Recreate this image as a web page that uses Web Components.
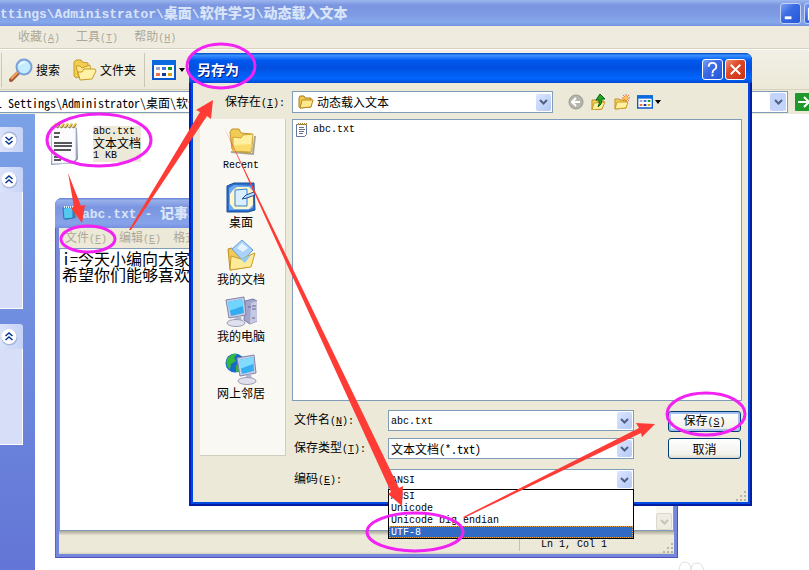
<!DOCTYPE html>
<html lang="zh-CN">
<head>
<meta charset="utf-8">
<meta name="viewport" content="width=device-width, initial-scale=1">
<title>另存为</title>
<style>
    html, body {
        margin: 0;
        height: 100%;
    }

    body {
        font: 12px/12px "Noto Sans CJK SC", sans-serif;
        font-feature-settings: "hwid";
        color: #000;
        overflow: hidden;
    }
</style>
</head>
<body>
    <xp-desktop>
        <explorer-window slot="explorer">
            <file-tile name="abc.txt" type="文本文档" size="1 KB"></file-tile>
        </explorer-window>
        <notepad-window slot="notepad">i=今天小编向大家
希望你们能够喜欢</notepad-window>
        <save-dialog slot="dialog"></save-dialog>
        <guide-marks slot="marks"></guide-marks>
    </xp-desktop>

<script>
const ICONS = {
    folder: `<svg viewBox="0 0 32 32"><path d="M6 27l22 2 2-18" fill="none" stroke="#aaa693" stroke-width="2"/><path d="M5 7l2-3h7l2 4 11 1v16l-2 3-16-2-2-2z" fill="#f0cb55" stroke="#c0952a"/><path d="M8 12l8 1 2-3 10-1-2 18-18-1z" fill="#fff09f" stroke="#d1a63a"/><path d="M9 20l18-1-1 7H9z" fill="#f9dc6d"/></svg>`,
    openFolder: `<svg viewBox="0 0 16 16"><path d="M1 4l1-2h4l1 2h6v9l-11 1-1-1z" fill="#f0c850" stroke="#a87c18"/><path d="M4 6h11l-2 7-11 1z" fill="#ffe98d" stroke="#b88a20"/></svg>`,
    folders: `<svg viewBox="0 0 24 24"><path d="M1 4l2-2h5l1 2 6 1v10l-12 5-2-2z" fill="#f3cd50" stroke="#c79b28"/><path d="M3 8h4l2 2 8-3 1 9-12 4z" fill="#ffe889" stroke="#c79b28"/><path d="M5 14h4l2-3h11l1 2-4 8-12 1z" fill="#fff1a5" stroke="#c79b28"/></svg>`,
    search: `<svg viewBox="0 0 24 24"><path d="M2 22l8-8" stroke="#a35a2b" stroke-width="4" stroke-linecap="round"/><path d="M2 21l7-7" stroke="#f1a35d" stroke-width="2"/><circle cx="15" cy="9" r="7.500" fill="#c3edff" stroke="#7a9fd8" stroke-width="2"/><path d="M10 8q2-5 7-4-4 1-7 4z" fill="#fff"/></svg>`,
    views: `<svg viewBox="0 0 24 20"><path d="M1 1h22v18H1z" fill="#fff" stroke="#0a5ad0" stroke-width="2"/><path d="M0 0h24v5H0z" fill="#0a6ae0"/><path d="M4 7h4v3H4z" fill="#a4a4d0"/><path d="M10 7h4v3h-4z" fill="#3b74e4"/><path d="M16 7h4v3h-4z" fill="#119a20"/><path d="M4 13h4v3H4z" fill="#ef7448"/><path d="M10 13h4v3h-4z" fill="#163a95"/><path d="M16 13h4v3h-4z" fill="#d8a413"/></svg>`,
    caret: `<svg viewBox="0 0 6 4"><path d="M0 0h6L3 4z"/></svg>`,
    go: `<svg viewBox="0 0 18 18"><rect width="18" height="18" rx="1" fill="#1f982c"/><path d="M3 9h11M9 4l5 5-5 5" fill="none" stroke="#fff" stroke-width="2"/></svg>`,
    chevron: `<svg viewBox="0 0 9 6"><path d="M1 1l3.500 3.500L8 1" fill="none" stroke="currentColor" stroke-width="2"/></svg>`,
    twisty: `<svg viewBox="0 0 18 18"><circle cx="9.500" cy="9.500" r="8" fill="#a9b6dc"/><circle cx="9" cy="8.500" r="7.500" fill="#fff"/><path d="M5.500 8L9 5l3.500 3M5.500 12L9 9l3.500 3" fill="none" stroke="#0a3b96" stroke-width="1.600"/></svg>`,
    note: `<svg viewBox="0 0 30 44"><path d="M2 6h26l1 31-4 4-23 2z" fill="#8791b8"/><path d="M2 5h25v32l-4 4-20 1z" fill="#fafaff" stroke="#b6bbcf"/><path d="M4 6l3-4M8 6l3-4M12 6l3-4M16 6l3-4M20 6l3-4M24 6l3-4" stroke="#856c24" stroke-width="2"/><path d="M4 5l3-4M8 5l3-4M12 5l3-4M16 5l3-4M20 5l3-4M24 5l3-4" stroke="#f4cf45" stroke-width="1.500"/><path d="M5 11h6M5 15h5M5 21h18M5 24h18M5 28h17M5 35h6M5 38h7" stroke="#222" stroke-width="1.300"/></svg>`,
    sheet: `<svg viewBox="0 0 14 16"><path d="M1.500 2.500h10v10l-2 2h-8z" fill="#fff" stroke="#68739c"/><path d="M3.500 3V1M5.500 3V1M7.500 3V1M9.500 3V1M11.500 3V1" stroke="#a78b3f"/><path d="M4 5.500h5M4 7.500h6M4 9.500h5M4 11.500h4" stroke="#6b7390"/></svg>`,
    notepad: `<svg viewBox="0 0 14 16"><path d="M1 3l11-1 2 11-11 2z" fill="#517b9b"/><path d="M1 3l10-1v11l-9 1z" fill="#56c8ef" stroke="#2677b8"/><path d="M2 2h9" stroke="#dff6ff" stroke-width="2" stroke-dasharray="1 1"/></svg>`,
    back: `<svg viewBox="0 0 16 16"><circle cx="8" cy="8" r="7" fill="#b5b5ad" stroke="#999990"/><path d="M12 8H4M8 4L4 8l4 4" fill="none" stroke="#fff" stroke-width="2"/></svg>`,
    up: `<svg viewBox="0 0 16 16"><path d="M1 6h4l1 1h7l-2 8-10 1z" fill="#f5d464" stroke="#b98d1d"/><path d="M3 9l11-1-3 7-10 1z" fill="#ffef9c" stroke="#c89b28"/><path d="M5 6l4-6 5 5h-3q0 6-4 8 2-4 1-7z" fill="#25a326" stroke="#08680f"/></svg>`,
    create: `<svg viewBox="0 0 16 16"><path d="M1 5h4l1 1h6v8L1 15z" fill="#f3cf5c" stroke="#c08f20"/><path d="M3 8h11l-2 6-11 1z" fill="#fff09e" stroke="#cd9e2a"/><path d="M12 0v8M8 4h8M9 1l6 6M15 1L9 7" stroke="#ef6840"/><circle cx="12" cy="4" r="2" fill="#ffca50"/></svg>`,
    desktop: `<svg viewBox="0 0 32 32"><path d="M2 4l7-3h20l1 27-7 2H2z" fill="#2d6fcb" stroke="#174e99"/><path d="M4 6l5-3 18 1 1 22-5 2H4z" fill="#6aa9f1"/><path d="M8 8l4-3h12l4 4v14l-4 4H9l-4-5V12z" fill="#fff6c9"/><path d="M10 8l12-1v17H10z" fill="#d9efff" stroke="#3881ca"/><path d="M17 17l4-4 8-3 1 3-8 3z" fill="#b6dcff" stroke="#204f99"/></svg>`,
    documents: `<svg viewBox="0 0 32 32"><path d="M3 10l4-1 3 3h13v16L5 31z" fill="#f0c957" stroke="#bd9023"/><path d="M7 10L17 1l11 10-10 11z" fill="#a9d3fb" stroke="#6a9edb"/><path d="M12 9l5-5 6 5-5 4z" fill="#e4f3ff"/><path d="M5 31l1-14 10 3 14-6-4 14z" fill="#ffeb97" stroke="#c79b28"/><path d="M15 20l11-4-6 8z" fill="#91caee"/></svg>`,
    computer: `<svg viewBox="0 0 32 32"><path d="M20 5l8-2 4 2v20l-7 3-6-4z" fill="#a3a6cc" stroke="#777ba9"/><path d="M26 7l6-2v20l-7 3z" fill="#c7c9e4"/><path d="M23 11h3M27 10h4M27 13h4M27 22h3" stroke="#60658d"/><path d="M1 4l18-3 2 18-17 3z" fill="#cbcee4" stroke="#7f83aa"/><path d="M3 6l14-3 2 14-13 3z" fill="#32abef"/><path d="M3 6l14-3 1 7-14 5z" fill="#70d4ff"/><path d="M10 21l6-1 1 5H9z" fill="#b3b6d0"/><ellipse cx="11" cy="27" rx="9" ry="3.500" fill="#dfe0ec" stroke="#9a9cb9"/></svg>`,
    network: `<svg viewBox="0 0 32 32"><circle cx="10" cy="10" r="9.500" fill="#1769cd"/><path d="M2 6q5-6 10-5l-3 4 2 3-5 3-1 6q-5-5-3-11zM11 12l5 1v5l-5 1z" fill="#35b83c"/><path d="M12 5l17-3 2 18-16 3z" fill="#cbcee4" stroke="#7f83aa"/><path d="M14 7l14-3 1 14-12 3z" fill="#35aef2"/><path d="M14 7l14-3v7l-13 5z" fill="#83dcff"/><path d="M21 22l5-1 1 5h-6z" fill="#b3b6d0"/><ellipse cx="22" cy="28" rx="9" ry="3.500" fill="#dfe0ec" stroke="#9a9cb9"/></svg>`,
    grip: `<svg viewBox="0 0 12 12"><path d="M9 1h2v2H9zM5 5h2v2H5zM9 5h2v2H9zM1 9h2v2H1zM5 9h2v2H5zM9 9h2v2H9z" fill="#b8b4a2"/></svg>`,
    help: `<svg viewBox="0 0 20 20"><path d="M6 7q0-4 4-4t4 4q0 2-2 3t-2 4M10 15v2" fill="none" stroke="#fff" stroke-width="2"/></svg>`,
    close: `<svg viewBox="0 0 20 20"><path d="M5 5l10 10M15 5L5 15" stroke="#fff" stroke-width="2"/></svg>`,
    minimize: `<svg viewBox="0 0 20 20"><path d="M4 13h7v3H4z" fill="#fff"/></svg>`,
    maximize: `<svg viewBox="0 0 20 20"><path d="M4 5h11v11H4z" fill="none" stroke="#fff" stroke-width="2"/></svg>`
};

// Latin text is half as wide as a CJK character
const MONO = 'font-family: "Liberation Mono", monospace; font-size: 10px;';

class XpElement extends HTMLElement {
    constructor() {
        super();
        this.attachShadow({ mode: 'open' });
    }

    connectedCallback() {
        this.shadowRoot.innerHTML = this.render();
    }
}

class XpIcon extends XpElement {
    render() {
        const width = this.getAttribute('w');
        const height = this.getAttribute('h') || width;
        return `
            <style>
                :host { display: block; flex: none; width: ${width}px; height: ${height}px; }
                svg { display: block; width: 100%; height: 100%; }
            </style>
            ${ICONS[this.getAttribute('name')]}
        `;
    }
}
customElements.define('xp-icon', XpIcon);

class XpDesktop extends XpElement {
    render() {
        return `
            <style>
                :host { display: block; position: relative; height: 100%; }
                ::slotted(*) { position: absolute; }
                ::slotted(explorer-window) { inset: 0; }
                ::slotted(notepad-window) { left: 55px; right: 131px; top: 198px; }
                ::slotted(save-dialog) { left: 189px; right: 57px; top: 53px; }
                ::slotted(guide-marks) { inset: 0; pointer-events: none; }
            </style>
            <slot name="explorer"></slot>
            <slot name="notepad"></slot>
            <slot name="dialog"></slot>
            <slot name="marks"></slot>
        `;
    }
}
customElements.define('xp-desktop', XpDesktop);

// Small square button in a window's title bar
class CaptionButton extends XpElement {
    render() {
        const kind = this.getAttribute('kind');
        const color = kind === 'close' ? '#f09070, #e0482a 40%, #c83010' : '#7b9ff5, #3c6ce4 40%, #2456d8';
        return `
            <style>
                :host { display: block; flex: none; }
                button {
                    display: block;
                    box-sizing: border-box;
                    width: 21px;
                    height: 21px;
                    padding: 0;
                    border: 1px solid #fff;
                    border-radius: 3px;
                    background: linear-gradient(135deg, ${color});
                }
                :host([dim]) button { border-color: #c3d2f6; }
            </style>
            <button type="button" aria-label="${this.getAttribute('label')}"><xp-icon name="${kind}" w="19"></xp-icon></button>
        `;
    }
}
customElements.define('caption-button', CaptionButton);

class TaskPanel extends XpElement {
    render() {
        const height = Number(this.getAttribute('body'));
        return `
            <style>
                :host { display: block; }
                header {
                    display: flex;
                    align-items: center;
                    height: 25px;
                    border-radius: 0 3px 0 0;
                    background: linear-gradient(90deg, #dbe3fa, #c6d3f7);
                }
                button { padding: 0; border: 0; background: none; }
                :host([collapsed]) button { transform: scaleY(-1); }
                div {
                    height: ${height}px;
                    background: #d6dff7;
                    border: solid #fff;
                    border-width: 0 1px 1px 0;
                }
            </style>
            <header><button type="button" aria-label="展开或折叠"><xp-icon name="twisty" w="18"></xp-icon></button></header>
            ${height ? '<div></div>' : ''}
        `;
    }
}
customElements.define('task-panel', TaskPanel);

class FileTile extends XpElement {
    render() {
        return `
            <style>
                :host { display: flex; align-items: center; gap: 14px; }
                div { background: #ece9d8; width: 48px; }
                span {
                    display: block;
                    height: 12px;
                    white-space: nowrap;
                    font-family: "Liberation Sans", "Noto Sans CJK SC", sans-serif;
                }
                .latin { ${MONO} }
            </style>
            <xp-icon name="note" w="30" h="44"></xp-icon>
            <div>
                <span class="latin">${this.getAttribute('name')}</span>
                <span>${this.getAttribute('type')}</span>
                <span class="latin">${this.getAttribute('size')}</span>
            </div>
        `;
    }
}
customElements.define('file-tile', FileTile);

class ExplorerWindow extends XpElement {
    render() {
        return `
            <style>
                :host { display: flex; flex-direction: column; overflow: hidden; background: #fff; }
                .title {
                    display: flex;
                    align-items: center;
                    gap: 3px;
                    height: 26px;
                    overflow: hidden;
                    background: linear-gradient(#9db7ee, #7b95e0 20%, #7f9be4 60%, #86a8ec 85%, #7893df);
                    color: #d8e4f8;
                    font-size: 14px;
                    font-weight: bold;
                }
                .title b { flex: 1; white-space: nowrap; }
                .title .latin { font-family: "Liberation Mono", monospace; font-size: 13px; }
                .title caption-button:last-child { margin-right: -16px; }
                .menu {
                    display: flex;
                    align-items: center;
                    gap: 16px;
                    height: 22px;
                    padding-left: 18px;
                    background: #efecdf;
                    border-bottom: 1px solid #d8d2bd;
                    color: #aca899;
                }
                .menu i { font-style: normal; ${MONO} }
                .tools {
                    display: flex;
                    align-items: center;
                    height: 39px;
                    border-top: 1px solid #fff;
                    background: linear-gradient(#f2f0e6, #ece9d8);
                }
                .tools button {
                    display: flex;
                    align-items: center;
                    gap: 3px;
                    padding: 0 0 0 6px;
                    margin-right: 7px;
                    border: 0;
                    background: none;
                    color: #000;
                    font: inherit;
                }
                hr { width: 1px; height: 34px; margin: 0 1px; border: 0; background: #cbc7b5; }
                .address {
                    display: flex;
                    align-items: center;
                    gap: 7px;
                    height: 24px;
                    overflow: hidden;
                    background: #ece9d8;
                    border-top: 1px solid #d8d2bd;
                }
                .box {
                    display: flex;
                    flex: 1;
                    align-items: center;
                    box-sizing: border-box;
                    height: 22px;
                    border: solid #7f9db9;
                    border-width: 1px 1px 1px 0;
                    background: #fff;
                    padding-right: 1px;
                }
                .box input {
                    flex: 1;
                    min-width: 0;
                    margin-left: -4px;
                    padding: 0;
                    border: 0;
                    background: none;
                    font: inherit;
                    font-feature-settings: "hwid";
                }
                .drop {
                    display: grid;
                    place-items: center;
                    width: 16px;
                    height: 18px;
                    padding: 0;
                    border: 0;
                    border-radius: 2px;
                    background: #c4d3fa;
                    color: #4d6185;
                }
                .go { padding: 0; border: 0; margin-right: -4px; background: none; }
                .content { display: flex; flex: 1; min-height: 0; }
                aside {
                    display: flex;
                    flex-direction: column;
                    gap: 15px;
                    box-sizing: border-box;
                    width: 35px;
                    padding: 13px 12px 0 0;
                    background: linear-gradient(#7ba2e7, #6375d6);
                }
                main { padding: 8px 14px; }
            </style>
            <div class="title">
                <b><span class="latin">ttings\\Administrator\\</span>桌面<span class="latin">\\</span>软件学习<span class="latin">\\</span>动态载入文本</b>
                <caption-button dim kind="minimize" label="最小化"></caption-button>
                <caption-button dim kind="maximize" label="最大化"></caption-button>
            </div>
            <nav class="menu"><span>收藏<i>(<u>A</u>)</i></span><span>工具<i>(<u>T</u>)</i></span><span>帮助<i>(<u>H</u>)</i></span></nav>
            <div class="tools">
                <hr>
                <button type="button"><xp-icon name="search" w="24"></xp-icon>搜索</button>
                <button type="button"><xp-icon name="folders" w="24"></xp-icon>文件夹</button>
                <hr>
                <button type="button" aria-label="查看"><xp-icon name="views" w="24" h="20"></xp-icon><xp-icon name="caret" w="6" h="4"></xp-icon></button>
            </div>
            <div class="address">
                <div class="box">
                    <input aria-label="地址" value="l Settings\\Administrator\\桌面\\软件学习\\动态载入文本">
                    <button class="drop" type="button" aria-label="地址列表"><xp-icon name="chevron" w="9" h="6"></xp-icon></button>
                </div>
                <button class="go" type="button" aria-label="转到"><xp-icon name="go" w="18"></xp-icon></button>
            </div>
            <div class="content">
                <aside>
                    <task-panel collapsed body="0"></task-panel>
                    <task-panel body="116"></task-panel>
                    <task-panel body="95"></task-panel>
                </aside>
                <main><slot></slot></main>
            </div>
        `;
    }
}
customElements.define('explorer-window', ExplorerWindow);

class NotepadWindow extends XpElement {
    render() {
        return `
            <style>
                :host {
                    display: block;
                    box-sizing: border-box;
                    height: 360px;
                    padding: 0 4px 4px;
                    border-radius: 7px 7px 0 0;
                    background: #7487dc;
                    box-shadow: inset 1px 0 #5464c4, inset -1px -1px #5050b8;
                }
                .window { display: flex; flex-direction: column; height: 100%; }
                header {
                    display: flex;
                    align-items: center;
                    gap: 6px;
                    height: 30px;
                    margin: 0 -4px;
                    padding-left: 7px;
                    border-radius: 7px 7px 0 0;
                    background: linear-gradient(#6580d4, #98b1eb 8%, #7b95e0 30%, #86a3ea 85%, #7590df);
                    color: #d8e4f8;
                    font-size: 14px;
                    font-weight: bold;
                }
                header .latin { font-family: "Liberation Mono", monospace; font-size: 13px; }
                nav {
                    display: flex;
                    align-items: center;
                    gap: 12px;
                    height: 20px;
                    padding-left: 6px;
                    background: #ece9d8;
                    color: #aca899;
                }
                nav i { font-style: normal; ${MONO} }
                .page {
                    display: flex;
                    flex: 1;
                    min-height: 0;
                    border: 1px solid #7f9db9;
                    background: #fff;
                }
                textarea {
                    flex: 1;
                    padding: 1px 2px;
                    border: 0;
                    resize: none;
                    outline: 0;
                    background: none;
                    font: 16px/16px "Noto Sans CJK SC", sans-serif;
                    font-feature-settings: "hwid";
                    overflow: hidden;
                }
                .scroll { display: flex; align-items: flex-end; width: 17px; background: #f7f6f0; }
                .scroll button {
                    display: grid;
                    place-items: center;
                    box-sizing: border-box;
                    width: 16px;
                    height: 17px;
                    padding: 0;
                    border: 1px solid #dcd9cb;
                    border-radius: 2px;
                    background: #efede3;
                    color: #c6c3b3;
                }
                footer {
                    display: flex;
                    align-items: center;
                    justify-content: flex-end;
                    height: 23px;
                    background: linear-gradient(#aca899, #ece9d8 20%, #ece9d8 90%, #d5d1bf);
                }
                footer span {
                    width: 143px;
                    padding: 4px 0 0 21px;
                    box-sizing: border-box;
                    border-left: 1px solid #c5c1b0;
                    ${MONO}
                }
                footer xp-icon { align-self: flex-end; }
            </style>
            <div class="window">
                <header><xp-icon name="notepad" w="14" h="16"></xp-icon><b><span class="latin">abc.txt - </span>记事本</b></header>
                <nav><span>文件<i>(<u>F</u>)</i></span><span>编辑<i>(<u>E</u>)</i></span><span>格式<i>(<u>O</u>)</i></span></nav>
                <div class="page">
                    <textarea aria-label="文本" spellcheck="false">${this.textContent}</textarea>
                    <div class="scroll"><button type="button" aria-label="向下滚动"><xp-icon name="chevron" w="9" h="6"></xp-icon></button></div>
                </div>
                <footer><span>Ln 1, Col 1</span><xp-icon name="grip" w="12"></xp-icon></footer>
            </div>
        `;
    }
}
customElements.define('notepad-window', NotepadWindow);

// Label plus a text box or drop-down; the label's text is the slot
class ComboField extends XpElement {
    render() {
        const value = this.getAttribute('value');
        const icon = this.getAttribute('icon');
        const control = this.hasAttribute('editable')
            ? `<input id="control" value="${value}">`
            : `<select id="control"><option>${value}</option></select>`;
        return `
            <style>
                :host { display: flex; align-items: center; }
                label { flex: none; width: 94px; white-space: nowrap; }
                i { font-style: normal; ${MONO} }
                .box {
                    display: flex;
                    align-items: center;
                    box-sizing: border-box;
                    flex: 1;
                    min-width: 0;
                    height: 21px;
                    padding: 0 1px 0 2px;
                    border: 1px solid #7f9db9;
                    background: #fff;
                }
                :host([icon]) label { width: 67px; }
                :host([icon]) .box { height: 22px; padding-left: 5px; gap: 3px; }
                input, select {
                    flex: 1;
                    min-width: 0;
                    padding: 0;
                    border: 0;
                    outline: 0;
                    appearance: none;
                    background: none;
                    color: #000;
                    font: inherit;
                    line-height: 16px;
                    font-feature-settings: "hwid";
                }
                :host([latin]) input, :host([latin]) select { padding-top: 2px; ${MONO} }
                .arrow {
                    display: grid;
                    place-items: center;
                    width: 15px;
                    height: 17px;
                    border-radius: 2px;
                    background: linear-gradient(135deg, #dce6ff, #b4c8f6);
                    color: #4d6185;
                    pointer-events: none;
                }
            </style>
            <label for="control"><slot></slot><i>(<u>${this.getAttribute('key')}</u>):</i></label>
            <div class="box">
                ${icon ? `<xp-icon name="${icon}" w="16"></xp-icon>` : ''}
                ${control}
                <span class="arrow"><xp-icon name="chevron" w="9" h="6"></xp-icon></span>
            </div>
        `;
    }
}
customElements.define('combo-field', ComboField);

class XpButton extends XpElement {
    render() {
        const key = this.getAttribute('key');
        return `
            <style>
                :host { display: block; }
                button {
                    display: block;
                    box-sizing: border-box;
                    width: 100%;
                    height: 21px;
                    padding: 0;
                    border: 1px solid #003c74;
                    border-radius: 3px;
                    background: linear-gradient(#fff, #f2f1ec 80%, #dcd8cc);
                    color: #000;
                    font: inherit;
                }
                i { font-style: normal; ${MONO} }
                :host([primary]) button { box-shadow: inset 0 0 0 2px #a5c0f0; }
            </style>
            <button type="button"><slot></slot>${key ? `<i>(<u>${key}</u>)</i>` : ''}</button>
        `;
    }
}
customElements.define('xp-button', XpButton);

class PlaceItem extends XpElement {
    render() {
        return `
            <style>
                :host { display: block; }
                a {
                    display: flex;
                    flex-direction: column;
                    align-items: center;
                    gap: 2px;
                    height: 57px;
                    color: #000;
                    text-decoration: none;
                }
                :host([latin]) a { line-height: 14px; ${MONO} }
            </style>
            <a href="#"><xp-icon name="${this.getAttribute('icon')}" w="32"></xp-icon><slot></slot></a>
        `;
    }
}
customElements.define('place-item', PlaceItem);

class SaveDialog extends XpElement {
    render() {
        return `
            <style>
                :host {
                    display: block;
                    box-sizing: border-box;
                    height: 453px;
                    padding: 0 4px 4px;
                    border-radius: 7px 7px 0 0;
                    background: #0048e0;
                    box-shadow: inset 2px 0 #0020c0, inset -2px -2px #001ea0;
                }
                header {
                    display: flex;
                    align-items: center;
                    gap: 2px;
                    height: 30px;
                    margin: 0 -4px;
                    padding: 2px 6px 0 8px;
                    box-sizing: border-box;
                    border-radius: 7px 7px 0 0;
                    background: linear-gradient(#0048c8, #3a90ff 8%, #0058ee 25%, #0050e0 50%, #0066ff 85%, #0048d0);
                    color: #fff;
                }
                h1 { flex: 1; margin: 0; font-size: 14px; line-height: 16px; text-shadow: 1px 1px #0a1883; }
                .body {
                    display: flex;
                    flex-direction: column;
                    gap: 6px;
                    box-sizing: border-box;
                    height: 419px;
                    padding: 8px 6px 0 7px;
                    background: #ece9d8;
                    position: relative;
                }
                .top { display: flex; align-items: center; gap: 15px; padding-left: 25px; }
                .top combo-field { flex: 1; }
                .icons { display: flex; align-items: center; gap: 7px; width: 174px; }
                .icons button { display: flex; align-items: center; gap: 2px; padding: 0; border: 0; background: none; }
                .main { display: flex; gap: 6px; }
                .places {
                    box-sizing: border-box;
                    width: 86px;
                    height: 337px;
                    padding: 6px 3px 0 0;
                    border: solid #d0cdbf;
                    border-width: 0 1px 1px 0;
                    background: #f9f8f3;
                }
                .right { flex: 1; min-width: 0; }
                .files {
                    box-sizing: border-box;
                    height: 282px;
                    padding: 1px 2px;
                    border: 1px solid #7f9db9;
                    background: #fff;
                }
                .file { display: flex; align-items: center; gap: 4px; height: 18px; ${MONO} }
                .form { display: flex; gap: 34px; padding: 9px 1px 0 2px; }
                .fields { display: flex; flex-direction: column; gap: 7px; flex: 1; min-width: 0; }
                .encoding { margin-top: 3px; position: relative; }
                .buttons { display: flex; flex-direction: column; gap: 6px; width: 73px; padding-top: 1px; }
                ul {
                    position: absolute;
                    left: 94px;
                    right: 0;
                    top: 20px;
                    margin: 0;
                    padding: 0;
                    list-style: none;
                    border: 1px solid #000;
                    background: #fff;
                    ${MONO}
                }
                li { padding-left: 2px; height: 12px; line-height: 14px; white-space: nowrap; }
                li[aria-selected] {
                    background: #316ac5;
                    color: #fff;
                    outline: 1px dotted #e0a040;
                    outline-offset: -1px;
                }
                .grip { position: absolute; right: 1px; bottom: 0; }
            </style>
            <header>
                <h1>另存为</h1>
                <caption-button kind="help" label="帮助"></caption-button>
                <caption-button kind="close" label="关闭"></caption-button>
            </header>
            <div class="body">
                <div class="top">
                    <combo-field icon="openFolder" value="动态载入文本" key="I">保存在</combo-field>
                    <div class="icons">
                        <button type="button" aria-label="后退"><xp-icon name="back" w="16"></xp-icon></button>
                        <button type="button" aria-label="向上"><xp-icon name="up" w="16"></xp-icon></button>
                        <button type="button" aria-label="新建文件夹"><xp-icon name="create" w="16"></xp-icon></button>
                        <button type="button" aria-label="查看"><xp-icon name="views" w="16" h="14"></xp-icon><xp-icon name="caret" w="6" h="4"></xp-icon></button>
                    </div>
                </div>
                <div class="main">
                    <nav class="places">
                        <place-item latin icon="folder">Recent</place-item>
                        <place-item icon="desktop">桌面</place-item>
                        <place-item icon="documents">我的文档</place-item>
                        <place-item icon="computer">我的电脑</place-item>
                        <place-item icon="network">网上邻居</place-item>
                    </nav>
                    <div class="right">
                        <div class="files"><div class="file"><xp-icon name="sheet" w="14" h="16"></xp-icon>abc.txt</div></div>
                        <div class="form">
                            <div class="fields">
                                <combo-field editable latin value="abc.txt" key="N">文件名</combo-field>
                                <combo-field value="文本文档(*.txt)" key="T">保存类型</combo-field>
                                <div class="encoding">
                                    <combo-field latin value="ANSI" key="E">编码</combo-field>
                                    <ul role="listbox" aria-label="编码">
                                        <li role="option">ANSI</li>
                                        <li role="option">Unicode</li>
                                        <li role="option">Unicode big endian</li>
                                        <li role="option" aria-selected="true">UTF-8</li>
                                    </ul>
                                </div>
                            </div>
                            <div class="buttons">
                                <xp-button primary key="S">保存</xp-button>
                                <xp-button>取消</xp-button>
                            </div>
                        </div>
                    </div>
                </div>
                <xp-icon class="grip" name="grip" w="12"></xp-icon>
            </div>
        `;
    }
}
customElements.define('save-dialog', SaveDialog);

// Circles and arrows that walk through the steps
class GuideMarks extends XpElement {
    render() {
        return `
            <style>
                :host { display: block; }
                svg { display: block; width: 100%; height: 100%; }
            </style>
            <svg aria-hidden="true">
                <g fill="none" stroke="#f222f2" stroke-width="3">
                    <ellipse cx="99" cy="140" rx="52" ry="26"/>
                    <ellipse cx="221" cy="66" rx="34" ry="22"/>
                    <ellipse cx="88" cy="239" rx="27" ry="13"/>
                    <ellipse cx="415" cy="532" rx="48" ry="19"/>
                    <ellipse cx="706" cy="414" rx="39" ry="21"/>
                </g>
                <g fill="#ff3b36">
                    <path d="M68 173L81 206L85 205L82 223L71 208L74 207z"/>
                    <path d="M129 230L200 112L196 110L213 100L211 119L207 116L131 230z"/>
                    <path d="M224 127L399 488L403 486L402 506L388 494L391 492z"/>
                    <path d="M463 517L639 428L636 423L655 424L642 437L641 433L464 518z"/>
                </g>
                <path d="M679 572q0-10 6-10t6 9q0-8 6-8t7 9" fill="none" stroke="#dedede"/>
            </svg>
        `;
    }
}
customElements.define('guide-marks', GuideMarks);
</script>
</body>
</html>
